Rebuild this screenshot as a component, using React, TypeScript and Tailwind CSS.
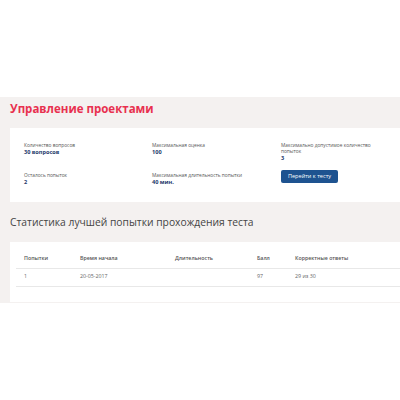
import React from 'react';

const Info: React.FC<{ label: string; value: string }> = ({ label, value }) => (
  <div className="flex flex-col">
    <span className="text-[4.8px] leading-[6.3px] text-[#555]">{label}</span>
    <span className="mt-[0.5px] text-[5.6px] leading-[7px] font-bold text-[#1d3a6b]">{value}</span>
  </div>
);

const rows = [{ attempt: '1', start: '20-05-2017', duration: '', score: '97', correct: '29 из 30' }];

export default function App() {
  return (
    <div className="w-[400px] h-[400px] bg-white overflow-hidden" style={{ fontFamily: '"Open Sans", "Noto Sans", sans-serif' }}>
      <div className="mt-[97px] bg-[#f4f1f0] pl-[10px] pb-[1px]">
        {/* Header */}
        <h1 className="pt-[3px] h-[31px] text-[11.5px] leading-[18px] font-bold text-[#e8304f]">
          Управление проектами
        </h1>

        {/* Test info */}
        <div className="bg-white h-[74px] pl-[14px] pt-[14px] flex">
          <div className="w-[128px] flex flex-col gap-[16px]">
            <Info label="Количество вопросов" value="30 вопросов" />
            <Info label="Осталось попыток" value="2" />
          </div>
          <div className="w-[129px] flex flex-col gap-[16px]">
            <Info label="Максимальная оценка" value="100" />
            <Info label="Максимальная длительность попытки" value="40 мин." />
          </div>
          <div className="w-[92px] flex flex-col">
            <Info label="Максимально допустимое количество попыток" value="3" />
            <button className="mt-[8px] h-[13px] w-[57px] rounded-[2px] bg-[#1e5390] text-white text-[5.6px] leading-[13px]">
              Перейти к тесту
            </button>
          </div>
        </div>

        {/* Stats */}
        <h2 className="h-[40px] pt-[12px] text-[10.3px] leading-[16px] text-[#444]">
          Статистика лучшей попытки прохождения теста
        </h2>
        <div className="bg-white h-[60px] pl-[6px] pt-[8px]">
          <table className="w-full border-collapse text-[5.3px]">
            <thead>
              <tr className="h-[18px] border-b border-[#e8e8e8] text-[#555] text-left">
                <th className="pl-[8px] w-[64px] font-semibold">Попытки</th>
                <th className="w-[95px] font-semibold">Время начала</th>
                <th className="w-[82px] font-semibold">Длительность</th>
                <th className="w-[38px] font-semibold">Балл</th>
                <th className="font-semibold">Корректные ответы</th>
              </tr>
            </thead>
            <tbody>
              {rows.map((r) => (
                <tr key={r.attempt} className="h-[18px] border-b border-[#e8e8e8] text-[#666]">
                  <td className="pl-[8px]">{r.attempt}</td>
                  <td>{r.start}</td>
                  <td>{r.duration}</td>
                  <td>{r.score}</td>
                  <td>{r.correct}</td>
                </tr>
              ))}
            </tbody>
          </table>
        </div>
      </div>
    </div>
  );
}
